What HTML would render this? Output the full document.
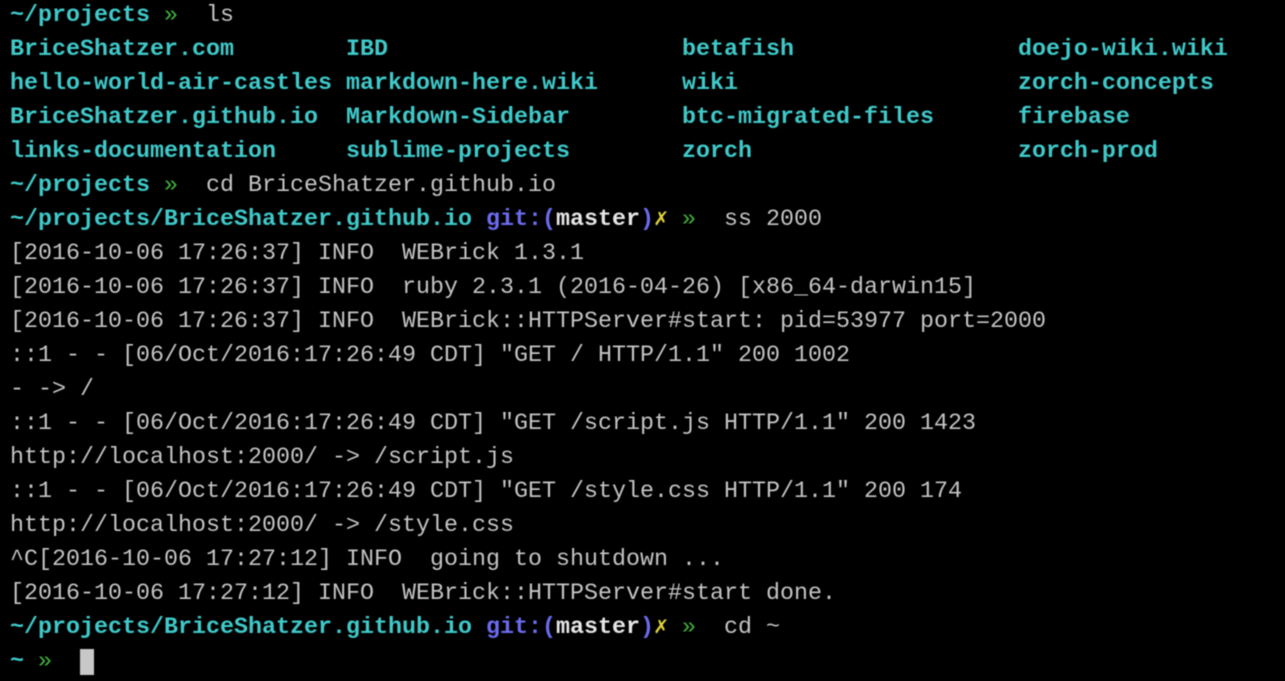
<!DOCTYPE html>
<html><head><style>
html,body{margin:0;background:#000;width:1285px;height:681px;overflow:hidden}
pre{margin:0;position:absolute;left:10px;top:-1px;font-family:"Liberation Mono",monospace;font-size:23.33px;line-height:34px;color:#c4c4c4;filter:blur(0.6px)}
.c{color:#3fc9c9;font-weight:bold}
.g{color:#3fb43a}
.b{color:#6b6bf0;font-weight:bold}
.w{color:#e6e6e6;font-weight:bold}
.y{color:#e0d23a}
.cur{background:#c8c8c8}
</style></head><body><pre><span class="c">~/projects</span> <span class="g">»</span>  ls
<span class="c">BriceShatzer.com        IBD                     betafish                doejo-wiki.wiki
hello-world-air-castles markdown-here.wiki      wiki                    zorch-concepts
BriceShatzer.github.io  Markdown-Sidebar        btc-migrated-files      firebase
links-documentation     sublime-projects        zorch                   zorch-prod</span>
<span class="c">~/projects</span> <span class="g">»</span>  cd BriceShatzer.github.io
<span class="c">~/projects/BriceShatzer.github.io</span> <span class="b">git:(</span><span class="w">master</span><span class="b">)</span><span class="y">✗</span> <span class="g">»</span>  ss 2000
[2016-10-06 17:26:37] INFO  WEBrick 1.3.1
[2016-10-06 17:26:37] INFO  ruby 2.3.1 (2016-04-26) [x86_64-darwin15]
[2016-10-06 17:26:37] INFO  WEBrick::HTTPServer#start: pid=53977 port=2000
::1 - - [06/Oct/2016:17:26:49 CDT] "GET / HTTP/1.1" 200 1002
- -&gt; /
::1 - - [06/Oct/2016:17:26:49 CDT] "GET /script.js HTTP/1.1" 200 1423
http://localhost:2000/ -&gt; /script.js
::1 - - [06/Oct/2016:17:26:49 CDT] "GET /style.css HTTP/1.1" 200 174
http://localhost:2000/ -&gt; /style.css
^C[2016-10-06 17:27:12] INFO  going to shutdown ...
[2016-10-06 17:27:12] INFO  WEBrick::HTTPServer#start done.
<span class="c">~/projects/BriceShatzer.github.io</span> <span class="b">git:(</span><span class="w">master</span><span class="b">)</span><span class="y">✗</span> <span class="g">»</span>  cd ~
<span class="c">~</span> <span class="g">»</span>  <span class="cur"> </span></pre></body></html>
